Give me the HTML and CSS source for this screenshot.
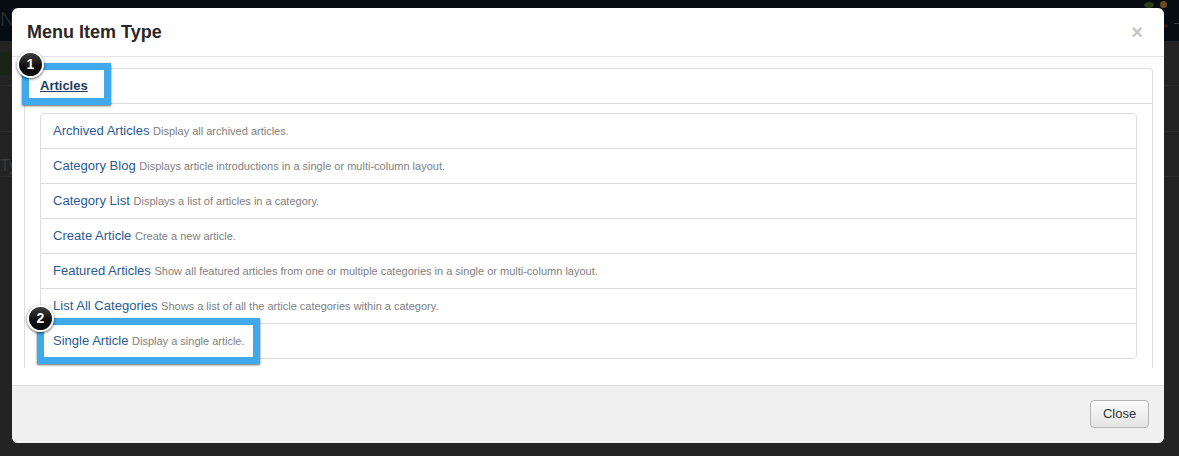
FILE: index.html
```html
<!DOCTYPE html>
<html lang="en">
<head>
  <meta charset="UTF-8">
  <title>Menu Item Type</title>
  <link rel="stylesheet" href="styles.css">
</head>
<body>
  <div class="backdrop">
    <div class="topbar">
      <span class="brand">N</span>
      <div class="top-icons">
        <span class="dot dot-green"></span>
        <span class="dot dot-orange"></span>
        <span class="dot dot-red"></span>
        <span class="dash"></span>
      </div>
    </div>
    <div class="toolbar"></div>
    <div class="back-row back-short"></div>
    <div class="back-row back-tall"></div>
    <div class="back-row back-label">Ty</div>
  </div>

  <div class="modal">
    <div class="modal-header">
      <h3>Menu Item Type</h3>
      <span class="close-x">&times;</span>
    </div>
    <div class="modal-body">
      <div class="tabs">
        <div class="tab-head"><a href="#" class="tab-link">Articles</a></div>
        <div class="tab-content">
          <ul class="type-list">
            <li><a href="#">Archived Articles</a> <small>Display all archived articles.</small></li>
            <li><a href="#">Category Blog</a> <small>Displays article introductions in a single or multi-column layout.</small></li>
            <li><a href="#">Category List</a> <small>Displays a list of articles in a category.</small></li>
            <li><a href="#">Create Article</a> <small>Create a new article.</small></li>
            <li><a href="#">Featured Articles</a> <small>Show all featured articles from one or multiple categories in a single or multi-column layout.</small></li>
            <li><a href="#">List All Categories</a> <small>Shows a list of all the article categories within a category.</small></li>
            <li><a href="#">Single Article</a> <small>Display a single article.</small></li>
          </ul>
        </div>
      </div>
    </div>
    <div class="modal-footer">
      <button class="btn">Close</button>
    </div>
  </div>

  <div class="mark mark-one"></div>
  <div class="mark mark-two"></div>
  <div class="badge badge-one">1</div>
  <div class="badge badge-two">2</div>
</body>
</html>
```

FILE: styles.css
```css
html, body {
  margin: 0;
  height: 100%;
}
body {
  font-family: 'Liberation Sans', Arial, sans-serif;
  background: #232323;
  color: #333;
  overflow: hidden;
}
.backdrop {
  height: 456px;
}
.topbar {
  height: 41px;
  background: #070b12;
  color: #262a2e;
  font-size: 20px;
  line-height: 38px;
  display: flex;
  justify-content: space-between;
}
.top-icons {
  position: relative;
  width: 40px;
}
.dot {
  position: absolute;
  border-radius: 50%;
}
.dot-green {
  left: 5px;
  top: 2px;
  width: 10px;
  height: 6px;
  background: #2d3d1c;
}
.dot-orange {
  left: 21px;
  top: 1px;
  width: 7px;
  height: 7px;
  background: #6b4a20;
}
.dot-red {
  left: 25px;
  top: 24px;
  width: 4px;
  height: 4px;
  background: #3a1512;
}
.dash {
  position: absolute;
  left: 35px;
  top: 23px;
  width: 5px;
  height: 1px;
  background: #3a3d42;
}
.toolbar {
  width: 100px;
  height: 23px;
  margin-top: 11px;
  background: #1a2316;
}
.back-row {
  border-bottom: 1px solid #2b2b2b;
}
.back-short {
  height: 10px;
}
.back-tall {
  height: 45px;
}
.back-label {
  height: 20px;
  padding-top: 24px;
  color: #3c3c3c;
  font-size: 16px;
  line-height: 20px;
}

.modal {
  position: absolute;
  left: 12px;
  top: 8px;
  width: 1152px;
  height: 435px;
  background: #fff;
  border-radius: 6px;
  display: flex;
  flex-direction: column;
  overflow: hidden;
}
.modal-header {
  height: 48px;
  flex: none;
  border-bottom: 1px solid #e5e5e5;
  display: flex;
  align-items: center;
  justify-content: space-between;
  padding: 0 21px 0 15px;
}
.modal-header h3 {
  margin: 0;
  font-size: 18px;
  line-height: 48px;
  color: #2b2724;
}
.close-x {
  font-size: 20px;
  font-weight: bold;
  color: #c4c4c4;
  line-height: 20px;
}
.modal-body {
  flex: 1;
  padding: 11px 11px 0 12px;
}
.tabs {
  height: 300px;
  box-sizing: border-box;
  border: 1px solid #ddd;
  border-bottom: none;
  border-radius: 4px 4px 0 0;
}
.tab-head {
  height: 34px;
  border-bottom: 1px solid #ddd;
  padding-left: 15px;
  line-height: 32px;
}
.tab-link {
  color: #1c3a63;
  font-size: 13px;
  font-weight: bold;
}
.tab-content {
  padding: 9px 15px 0;
}
.type-list {
  list-style: none;
  margin: 0;
  padding: 0;
  border: 1px solid #ddd;
  border-radius: 4px;
}
.type-list li {
  height: 34px;
  line-height: 34px;
  padding-left: 12px;
  border-bottom: 1px solid #ddd;
  font-size: 13.05px;
}
.type-list li:last-child {
  border-bottom: none;
}
.type-list a {
  color: #2a5a94;
  text-decoration: none;
}
.type-list small {
  font-size: 11px;
  color: #808080;
}
.modal-footer {
  height: 58px;
  flex: none;
  box-sizing: border-box;
  background: #f0f0f0;
  border-top: 1px solid #ddd;
  display: flex;
  align-items: center;
  justify-content: flex-end;
  padding: 0 15px 1px 0;
}
.btn {
  width: 59px;
  height: 28px;
  padding: 0 0 2px;
  font-family: inherit;
  font-size: 13px;
  color: #333;
  background: linear-gradient(#fafafa, #e4e4e4);
  border: 1px solid #b5b5b5;
  border-radius: 4px;
}

/* annotations on top of the screenshot */
.mark {
  position: absolute;
  box-sizing: border-box;
  border: 7px solid #3fa9ec;
  box-shadow: 0 1px 2px rgba(0, 0, 0, 0.6);
}
.mark-one {
  left: 22px;
  top: 63px;
  width: 89px;
  height: 42px;
}
.mark-two {
  left: 37px;
  top: 318px;
  width: 223px;
  height: 46px;
}
.badge {
  position: absolute;
  box-sizing: border-box;
  width: 27px;
  height: 27px;
  border: 2px solid #fff;
  border-radius: 50%;
  background: linear-gradient(#3c3c3c, #0c0c0c 65%);
  box-shadow: 0 1px 3px rgba(0, 0, 0, 0.7);
  color: #fff;
  font-size: 14px;
  font-weight: bold;
  line-height: 23px;
  text-align: center;
}
.badge-one {
  left: 17px;
  top: 51px;
}
.badge-two {
  left: 27px;
  top: 305px;
}
```
